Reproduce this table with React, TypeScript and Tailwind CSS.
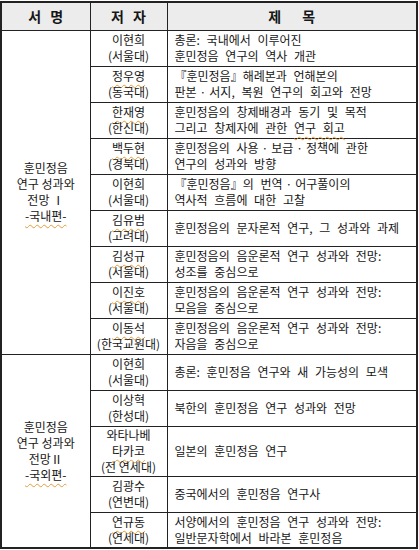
const S1 = [
  { name: "이현희", org: "(서울대)", title: ["총론: 국내에서 이루어진", "훈민정음 연구의 역사 개관"] },
  { name: "정우영", org: "(동국대)", sq: true, title: ["『훈민정음』해례본과 언해본의", "판본·서지, 복원 연구의 회고와 전망"] },
  { name: "한재영", org: "(한신대)", sq: true, title: ["훈민정음의 창제배경과 동기 및 목적", "그리고 창제자에 관한 @연구 회고"] },
  { name: "백두현", org: "(경북대)", sq: true, title: ["훈민정음의 사용·보급·정책에 관한", "연구의 성과와 방향"] },
  { name: "이현희", org: "(서울대)", title: ["『훈민정음』의 번역·어구풀이의", "역사적 흐름에 대한 고찰"] },
  { name: "김유범", org: "(고려대)", sq: true, title: ["훈민정음의 문자론적 연구, 그 성과와 과제"] },
  { name: "김성규", org: "(서울대)", sq: true, title: ["훈민정음의 음운론적 연구 성과와 전망:", "성조를 중심으로"] },
  { name: "이진호", org: "(서울대)", sq: true, title: ["훈민정음의 음운론적 연구 성과와 전망:", "모음을 중심으로"] },
  { name: "이동석", org: "(한국교원대)", sq: true, title: ["훈민정음의 음운론적 연구 성과와 전망:", "자음을 중심으로"] },
];

const S2 = [
  { name: "이현희", org: "(서울대)", title: ["총론: 훈민정음 연구와 새 가능성의 모색"] },
  { name: "이상혁", org: "(한성대)", title: ["북한의 훈민정음 연구 성과와 전망"] },
  { name: "와타나베", name2: "타카코", org: "(전 연세대)", title: ["일본의 훈민정음 연구"], tall: true },
  { name: "김광수", org: "(연변대)", title: ["중국에서의 훈민정음 연구사"] },
  { name: "연규동", org: "(연세대)", sq: true, title: ["서양에서의 훈민정음 연구 성과와 전망:", "일반문자학에서 바라본 훈민정음"] },
];

const sq = "underline decoration-wavy decoration-[#e39b3a] decoration-1 underline-offset-[3px]";

// middle dots get a little air on each side instead of full spaces
function Dotted({ text }: { text: string }) {
  const parts = text.split("·");
  return (
    <>
      {parts.map((p, i) => (
        <span key={i}>
          {i > 0 && <span className="mx-[3px]">·</span>}
          {p}
        </span>
      ))}
    </>
  );
}

function TitleLine({ text }: { text: string }) {
  if (text.includes("@")) {
    const [a, b] = text.split("@");
    return (
      <div>
        {a}
        <span className={sq}>{b}</span>
      </div>
    );
  }
  return (
    <div>
      <Dotted text={text} />
    </div>
  );
}

type Row = { name: string; name2?: string; org: string; sq?: boolean; title: string[]; tall?: boolean };

function Rows({ rows, book }: { rows: Row[]; book: React.ReactNode }) {
  return (
    <>
      {rows.map((r, i) => (
        <tr key={i} className={r.tall ? "h-[50px]" : "h-[36px]"}>
          {i === 0 && (
            <td rowSpan={rows.length} className="border border-[#222] text-center align-middle leading-[16px]">
              {book}
            </td>
          )}
          <td className="border border-[#222] text-center align-middle leading-[16px]">
            <div className={r.sq ? sq : ""}>{r.name}</div>
            {r.name2 && <div className={sq}>{r.name2}</div>}
            <div>{r.org}</div>
          </td>
          <td className="border border-[#222] pl-[7px] align-middle leading-[16px] [word-spacing:4px]">
            {r.title.map((t, j) => (
              <TitleLine key={j} text={t} />
            ))}
          </td>
        </tr>
      ))}
    </>
  );
}

export default function App() {
  return (
    <div className="w-[419px] h-[550px] bg-white text-[12px] text-[#161616] font-['Noto_Sans_CJK_KR',sans-serif] pt-px">
      <table className="w-[418px] table-fixed border-collapse border-2 border-[#222]">
        <colgroup>
          <col className="w-[89px]" />
          <col className="w-[77px]" />
          <col />
        </colgroup>
        <thead>
          <tr className="h-[28px] bg-[#ececec] text-[14px] font-bold">
            <th className="border border-[#222] [word-spacing:6px]">서 명</th>
            <th className="border border-[#222] [word-spacing:6px]">저 자</th>
            <th className="border border-[#222] [word-spacing:18px]">제 목</th>
          </tr>
        </thead>
        <tbody>
          <Rows
            rows={S1}
            book={
              <>
                <div>훈민정음</div>
                <div>연구 성과와</div>
                <div>전망 Ⅰ</div>
                <div className={sq}>-국내편-</div>
              </>
            }
          />
          <Rows
            rows={S2}
            book={
              <>
                <div>훈민정음</div>
                <div>연구 성과와</div>
                <div>전망Ⅱ</div>
                <div className={sq}>-국외편-</div>
              </>
            }
          />
        </tbody>
      </table>
    </div>
  );
}
